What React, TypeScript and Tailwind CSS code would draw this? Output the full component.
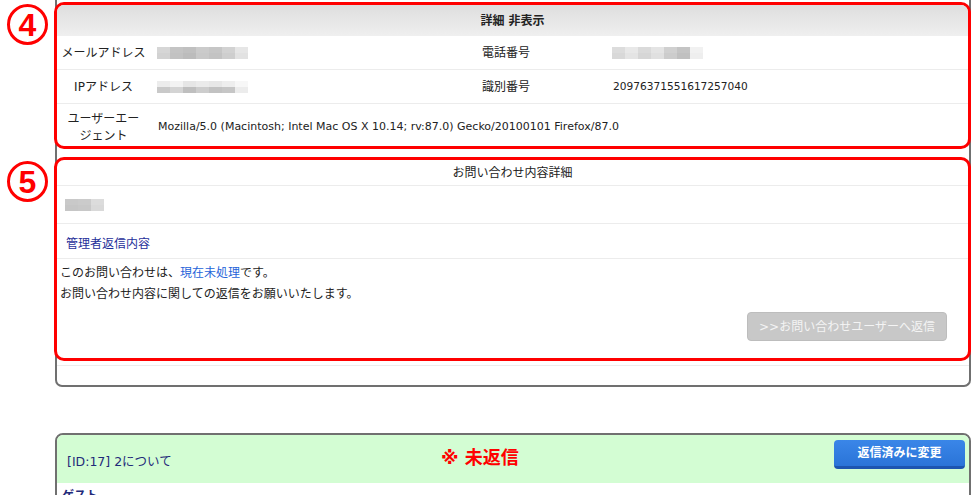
import React from 'react';

const FONT = { fontFamily: '"DejaVu Sans", "Noto Sans CJK JP", sans-serif' };

function Circled({ n, className }: { n: string; className?: string }) {
  return (
    <div
      className={`w-[41px] h-[41px] rounded-full border-[3px] border-[#ff0000] flex items-center justify-center text-[#ff0000] text-[32px] font-bold leading-none ${className ?? ''}`}
      style={{ fontFamily: '"Liberation Sans", Arial, sans-serif' }}
    >
      {n}
    </div>
  );
}

// pixelated mosaic used in place of masked personal data
function Mosaic({ rows }: { rows: string[][] }) {
  return (
    <div className="flex flex-col">
      {rows.map((row, i) => (
        <div key={i} className="flex">
          {row.map((c, j) => (
            <div key={j} className="w-[13px] h-[6px]" style={{ backgroundColor: c }} />
          ))}
        </div>
      ))}
    </div>
  );
}

const EMAIL_MOSAIC = [
  ['#d6d6d6', '#c4c4c4', '#c0c0c0', '#cbcbcb', '#c6c6c6', '#d2d2d2', '#e6e6e6'],
  ['#d2d2d2', '#c2c2c2', '#bcbcbc', '#c9c9c9', '#c3c3c3', '#cecece', '#e2e2e2'],
];
const IP_MOSAIC = [
  ['#ececec', '#f3f3f3', '#e6e6e6', '#ebebeb', '#e7e7e7', '#eeeeee', '#f7f7f7'],
  ['#c9c9c9', '#d4d4d4', '#bfbfbf', '#cdcdcd', '#c2c2c2', '#c6c6c6', '#ececec'],
];
const PHONE_MOSAIC = [
  ['#dcdcdc', '#e8e8e8', '#dadada', '#e4e4e4', '#d0d0d0', '#c4c4c4', '#f1f1f1'],
  ['#d8d8d8', '#e4e4e4', '#d6d6d6', '#e0e0e0', '#cccccc', '#c0c0c0', '#eeeeee'],
];
const BODY_MOSAIC = [
  ['#c9c9c9', '#cbcbcb', '#dcdcdc'],
  ['#c6c6c6', '#c8c8c8', '#d9d9d9'],
];

export default function App() {
  return (
    <div className="w-[980px] h-[495px] overflow-hidden bg-white text-[#222] text-[12px]" style={FONT}>
      <div className="flex">
        {/* annotation gutter */}
        <div className="w-[55px] shrink-0 flex flex-col pl-[7px] pt-[4px]">
          <Circled n="4" />
          <Circled n="5" className="mt-[116px]" />
        </div>

        {/* detail card (continues above the viewport) */}
        <div className="w-[916px] border-x-2 border-b-2 border-[#707070] rounded-b-[7px] h-[387px] flex flex-col">
          {/* section 4 */}
          <div className="-ml-[3px] -mr-[2px] mt-[2px] border-[3px] border-[#ff0000] rounded-[10px] overflow-hidden">
            <div className="h-[31px] bg-gradient-to-b from-[#dedede] to-[#efefef] flex items-center justify-center font-bold">
              詳細 非表示
            </div>
            <div className="grid grid-cols-[93px_255px_202px_1fr]">
              <div className="h-[34px] flex items-center justify-center border-b border-[#ececec]">メールアドレス</div>
              <div className="h-[34px] flex items-center pl-[7px] border-b border-[#ececec]">
                <Mosaic rows={EMAIL_MOSAIC} />
              </div>
              <div className="h-[34px] flex items-center justify-center border-b border-[#ececec]">電話番号</div>
              <div className="h-[34px] flex items-center pl-[5px] border-b border-[#ececec]">
                <Mosaic rows={PHONE_MOSAIC} />
              </div>

              <div className="h-[34px] flex items-center justify-center border-b border-[#ececec]">IPアドレス</div>
              <div className="h-[34px] flex items-center pl-[7px] border-b border-[#ececec]">
                <Mosaic rows={IP_MOSAIC} />
              </div>
              <div className="h-[34px] flex items-center justify-center border-b border-[#ececec]">識別番号</div>
              <div className="h-[34px] flex items-center pl-[6px] border-b border-[#ececec] text-[10.6px]">
                20976371551617257040
              </div>

              <div className="h-[42px] pt-[6px] flex items-center justify-center text-center leading-[17px] px-[8px]">
                ユーザーエージェント
              </div>
              <div className="col-span-3 h-[42px] pt-[5px] flex items-center pl-[8px] text-[11px]">
                Mozilla/5.0 (Macintosh; Intel Mac OS X 10.14; rv:87.0) Gecko/20100101 Firefox/87.0
              </div>
            </div>
          </div>

          {/* section 5 */}
          <div className="-ml-[3px] -mr-[2px] mt-[8px] border-[3px] border-[#ff0000] rounded-[10px] overflow-hidden">
            <div className="h-[26px] flex items-center justify-center border-b border-[#ececec]">
              お問い合わせ内容詳細
            </div>
            <div className="h-[38px] flex items-center pl-[8px] border-b border-[#ececec]">
              <Mosaic rows={BODY_MOSAIC} />
            </div>
            <div className="h-[35px] pt-[5px] flex items-center pl-[9px] border-b border-[#ececec] text-[#1f2f9a]">
              管理者返信内容
            </div>
            <div className="px-[3px] pt-[4px] leading-[21px]">
              <p>
                このお問い合わせは、<span className="text-[#2563d9]">現在未処理</span>です。
              </p>
              <p>お問い合わせ内容に関しての返信をお願いいたします。</p>
            </div>
            <div className="flex justify-end pr-[21px] pt-[7px] pb-[17px]">
              <button className="w-[200px] h-[29px] rounded-[4px] bg-[#c8c8c8] border border-[#bdbdbd] text-[#f4f4f4] text-[12px]">
                &gt;&gt;お問い合わせユーザーへ返信
              </button>
            </div>
          </div>

          <div className="mt-[4px] border-t border-[#ececec]" />
        </div>
      </div>

      {/* next inquiry card */}
      <div className="ml-[55px] mt-[46px] w-[916px] border-2 border-[#707070] rounded-t-[8px] overflow-hidden">
        <div className="h-[48px] bg-[#d3fdd3] flex items-center pl-[10px] pr-[4px]">
          <div className="w-[374px] pt-[6px] text-[#1f2a7a] text-[12.5px]">[ID:17] 2について</div>
          <div className="text-[#ff0000] font-bold text-[18px] -mt-[4px]">※ 未返信</div>
          <button className="ml-auto -mt-[10px] w-[131px] h-[29px] rounded-[4px] bg-gradient-to-b from-[#3a86e8] to-[#2a74d8] border-b-[3px] border-[#1c55b0] text-white font-bold text-[12px]">
            返信済みに変更
          </button>
        </div>
        <div className="pl-[5px] pt-[4px] text-[#1f2a7a] font-bold text-[12px] h-[40px]">ゲスト</div>
      </div>
    </div>
  );
}
